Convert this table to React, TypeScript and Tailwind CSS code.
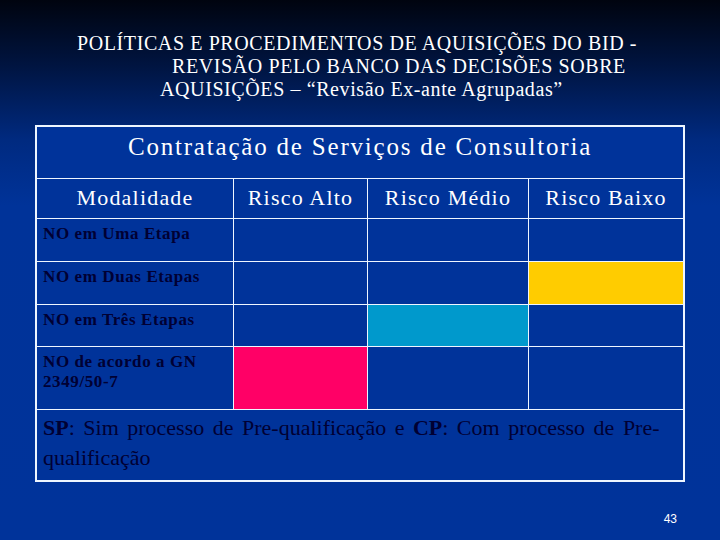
import React from 'react';

const serif = { fontFamily: '"Liberation Serif", "Times New Roman", serif' };

const rows: { label: string[]; fills: (string | null)[]; h: string }[] = [
  { label: ['NO em Uma Etapa'], fills: [null, null, null], h: 'h-[42px]' },
  { label: ['NO em Duas Etapas'], fills: [null, null, 'bg-[#ffcc00]'], h: 'h-[42px]' },
  { label: ['NO em Três Etapas'], fills: [null, 'bg-[#0099cc]', null], h: 'h-[41px]' },
  { label: ['NO de acordo a GN', '2349/50-7'], fills: ['bg-[#ff0066]', null, null], h: 'h-[62px]' },
];

const App: React.FC = () => {
  return (
    <div
      className="flex h-[540px] w-[720px] flex-col overflow-hidden bg-[linear-gradient(to_bottom,#00040f_0%,#001440_12%,#002a80_26%,#003399_38%,#00339a_100%)]"
      style={serif}
    >
      <div className="flex flex-col pt-[32px] text-[20px] leading-[23px] tracking-[0.6px] text-white">
        <div className="pl-[77px]">POLÍTICAS E PROCEDIMENTOS DE AQUISIÇÕES DO BID -</div>
        <div className="pl-[172px]">REVISÃO PELO BANCO DAS DECISÕES SOBRE</div>
        <div className="pl-[160px]">AQUISIÇÕES – “Revisão Ex-ante Agrupadas”</div>
      </div>

      <div className="ml-[35px] mt-[24px] w-[650px] border-2 border-[#eef6ff] bg-[#eef6ff]">
        <div className="grid grid-cols-[196px_133px_160px_154px] gap-px">
          <div className="col-span-4 h-[51px] bg-[#00339a] pt-[6px] text-center text-[25px] leading-[28px] tracking-[1.8px] text-white">
            Contratação de Serviços de Consultoria
          </div>

          {['Modalidade', 'Risco Alto', 'Risco Médio', 'Risco Baixo'].map((t) => (
            <div key={t} className="h-[39px] bg-[#00339a] pt-[6px] text-center text-[22px] leading-[26px] tracking-[1.2px] text-white">
              {t}
            </div>
          ))}

          {rows.map((r) => (
            <React.Fragment key={r.label[0]}>
              <div className={`${r.h} bg-[#00339a] pl-[6px] pt-[5px] text-[17px] font-bold leading-[20px] tracking-[0.6px] text-[#000033]`}>
                {r.label.map((l) => (
                  <div key={l}>{l}</div>
                ))}
              </div>
              {r.fills.map((f, i) => (
                <div key={i} className={`${r.h} ${f ?? 'bg-[#00339a]'}`} />
              ))}
            </React.Fragment>
          ))}

          <div className="col-span-4 h-[70px] bg-[#00339a] pl-[6px] pt-[3px] text-[22px] leading-[30px] text-[#000033]">
            <div className="[word-spacing:3px]">
              <span className="font-bold">SP</span>: Sim processo de Pre-qualificação e <span className="font-bold">CP</span>: Com processo de Pre-
            </div>
            <div>qualificação</div>
          </div>
        </div>
      </div>

      <div
        className="mt-[30px] flex justify-end pr-[43px] text-[12px] leading-[14px] text-white"
        style={{ fontFamily: '"Liberation Sans", Arial, sans-serif' }}
      >
        43
      </div>
    </div>
  );
};

export default App;
